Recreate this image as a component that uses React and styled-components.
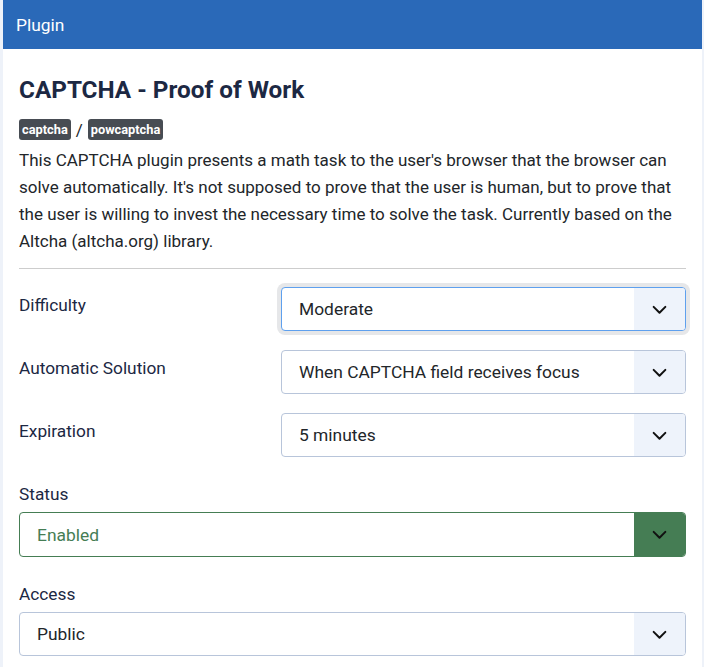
import React from "react";
import styled, { createGlobalStyle } from "styled-components";

const GlobalStyle = createGlobalStyle`
    html, body {
        margin: 0;
        padding: 0;
        background: #eef2f9;
    }
    body {
        font-family: Roboto, "Noto Sans", "Liberation Sans", sans-serif;
        color: #22262a;
    }
`;

const Page = styled.div`
    padding: 0 2px 0 3px;
`;

const Card = styled.div`
    background: #fff;
    min-height: 667px;
`;

const CardHeader = styled.div`
    background: #2a69b8;
    color: #fff;
    height: 49px;
    display: flex;
    align-items: center;
    padding-left: 13px;
    font-size: 17.4px;
`;

const CardBody = styled.div`
    padding: 25px 16px 0 16px;
`;

const Title = styled.h2`
    margin: 0;
    font-size: 24.3px;
    font-weight: 700;
    color: #1c2843;
    line-height: 32px;
`;

const Badges = styled.div`
    display: flex;
    align-items: center;
    gap: 5px;
    margin-top: 13px;
    font-size: 17px;
    color: #22262a;
`;

const Badge = styled.span`
    background: #474c53;
    color: #fff;
    font-size: 12.8px;
    font-weight: 700;
    padding: 0 3px;
    height: 21px;
    line-height: 21px;
    border-radius: 3px;
`;

const Description = styled.p`
    margin: 7px 0 0 0;
    font-size: 17px;
    line-height: 27px;
    color: #22262a;
`;

const Divider = styled.hr`
    border: 0;
    border-top: 1px solid #cdcdcd;
    margin: 13px 0 18px 0;
`;

const Row = styled.div`
    display: grid;
    grid-template-columns: 262px 1fr;
    align-items: start;
    margin-bottom: ${(p) => (p.$last ? "27px" : "19px")};
`;

const Stack = styled.div`
    display: flex;
    flex-direction: column;
    gap: 8px;
    margin-bottom: 27px;
`;

const Label = styled.label`
    font-size: 17.3px;
    color: #1c2843;
    padding-top: ${(p) => (p.$inline ? "8px" : "0")};
    line-height: 20px;
`;

const SelectBox = styled.div`
    display: flex;
    height: ${(p) => (p.$tone === "success" ? "45px" : "44px")};
    box-sizing: border-box;
    border: 1px solid
        ${(p) =>
            p.$tone === "success"
                ? "#457d54"
                : p.$focus
                ? "#5ea0ee"
                : "#b8c5da"};
    border-radius: 4px;
    overflow: hidden;
    background: #fff;
    box-shadow: ${(p) => (p.$focus ? "0 0 0 4px #e6e7e9" : "none")};
`;

const SelectValue = styled.div`
    flex: 1;
    display: flex;
    align-items: center;
    padding-left: 17px;
    font-size: 17.4px;
    color: ${(p) => (p.$tone === "success" ? "#457d54" : "#22262a")};
`;

const Caret = styled.div`
    width: 51px;
    display: flex;
    align-items: center;
    justify-content: center;
    background: ${(p) => (p.$tone === "success" ? "#457d54" : "#eef3fb")};
    color: #111;
`;

const Chevron = () => (
    <svg width="17" height="17" viewBox="0 0 16 16" fill="none">
        <path
            d="M2.5 5.5 L8 11 L13.5 5.5"
            stroke="currentColor"
            strokeWidth="1.9"
            strokeLinecap="round"
            strokeLinejoin="round"
        />
    </svg>
);

const Select = ({ value, tone, focus }) => (
    <SelectBox $tone={tone} $focus={focus}>
        <SelectValue $tone={tone}>{value}</SelectValue>
        <Caret $tone={tone}>
            <Chevron />
        </Caret>
    </SelectBox>
);

const inlineFields = [
    { label: "Difficulty", value: "Moderate", focus: true },
    { label: "Automatic Solution", value: "When CAPTCHA field receives focus" },
    { label: "Expiration", value: "5 minutes" },
];

export default function App() {
    return (
        <Page>
            <GlobalStyle />
            <Card>
                <CardHeader>Plugin</CardHeader>
                <CardBody>
                    <Title>CAPTCHA - Proof of Work</Title>
                    <Badges>
                        <Badge>captcha</Badge>/<Badge>powcaptcha</Badge>
                    </Badges>
                    <Description>
                        This CAPTCHA plugin presents a math task to the user's
                        browser that the browser can solve automatically. It's
                        not supposed to prove that the user is human, but to
                        prove that the user is willing to invest the necessary
                        time to solve the task. Currently based on the Altcha
                        (altcha.org) library.
                    </Description>
                    <Divider />
                    {inlineFields.map((f, i) => (
                        <Row key={f.label} $last={i === inlineFields.length - 1}>
                            <Label $inline>{f.label}</Label>
                            <Select value={f.value} focus={f.focus} />
                        </Row>
                    ))}
                    <Stack>
                        <Label>Status</Label>
                        <Select value="Enabled" tone="success" />
                    </Stack>
                    <Stack>
                        <Label>Access</Label>
                        <Select value="Public" />
                    </Stack>
                </CardBody>
            </Card>
        </Page>
    );
}
